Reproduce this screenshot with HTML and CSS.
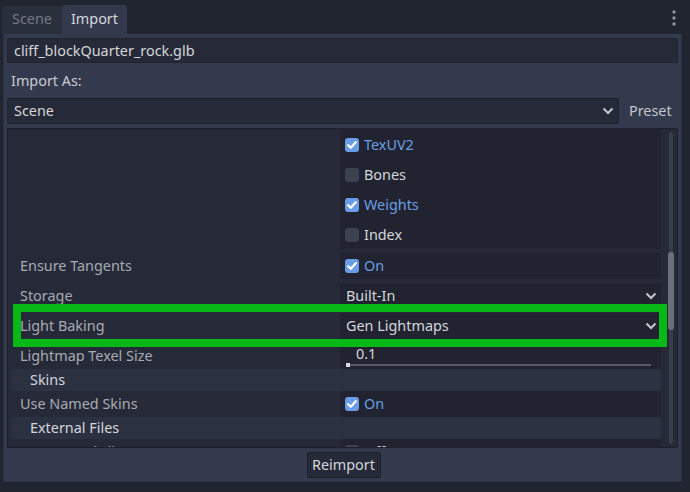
FILE: index.html
```html
<!DOCTYPE html>
<html>
<head>
<meta charset="utf-8">
<link rel="stylesheet" href="styles.css">
</head>
<body>
<div class="root">
  <div class="tabbar">
    <div class="tab tab-scene">Scene</div>
    <div class="tab tab-active">Import</div>
    <div class="tab-spacer"></div>
    <svg class="menu-dots" width="6" height="18" viewBox="0 0 6 18">
      <circle cx="3" cy="3" r="1.7" fill="#8f939c"/>
      <circle cx="3" cy="9" r="1.7" fill="#8f939c"/>
      <circle cx="3" cy="15" r="1.7" fill="#8f939c"/>
    </svg>
  </div>
  <div class="panel">
    <div class="field">cliff_blockQuarter_rock.glb</div>
    <div class="import-as">Import As:</div>
    <div class="select-row">
      <div class="select">
        <span>Scene</span>
        <svg class="chev" width="12" height="8" viewBox="0 0 12 8"><path d="M1.5 1.5 L6 6 L10.5 1.5" fill="none" stroke="#c4c6cc" stroke-width="2"/></svg>
      </div>
      <div class="preset">Preset</div>
    </div>
    <div class="inspector">
      <div class="content">
        <div class="prop arr">
          <div class="plabel"></div>
          <div class="pval arrval">
            <div class="chk-row first"><span class="cb on"><svg width="14" height="14" viewBox="0 0 14 14"><path d="M3.2 7.2 L5.8 9.8 L10.8 4.2" fill="none" stroke="#fff" stroke-width="2.2" stroke-linecap="round" stroke-linejoin="round"/></svg></span><span class="blue">TexUV2</span></div>
            <div class="chk-row"><span class="cb"></span><span class="val">Bones</span></div>
            <div class="chk-row"><span class="cb on"><svg width="14" height="14" viewBox="0 0 14 14"><path d="M3.2 7.2 L5.8 9.8 L10.8 4.2" fill="none" stroke="#fff" stroke-width="2.2" stroke-linecap="round" stroke-linejoin="round"/></svg></span><span class="blue">Weights</span></div>
            <div class="chk-row"><span class="cb"></span><span class="val">Index</span></div>
          </div>
        </div>
        <div class="prop gap">
          <div class="plabel">Ensure Tangents</div>
          <div class="pval"><span class="cb on"><svg width="14" height="14" viewBox="0 0 14 14"><path d="M3.2 7.2 L5.8 9.8 L10.8 4.2" fill="none" stroke="#fff" stroke-width="2.2" stroke-linecap="round" stroke-linejoin="round"/></svg></span><span class="blue">On</span></div>
        </div>
        <div class="prop gap">
          <div class="plabel">Storage</div>
          <div class="pval dd"><span class="val">Built-In</span><svg class="chev" width="12" height="8" viewBox="0 0 12 8"><path d="M1.5 1.5 L6 6 L10.5 1.5" fill="none" stroke="#c4c6cc" stroke-width="2"/></svg></div>
        </div>
        <div class="prop gap">
          <div class="plabel">Light Baking</div>
          <div class="pval dd"><span class="val">Gen Lightmaps</span><svg class="chev" width="12" height="8" viewBox="0 0 12 8"><path d="M1.5 1.5 L6 6 L10.5 1.5" fill="none" stroke="#c4c6cc" stroke-width="2"/></svg></div>
        </div>
        <div class="prop gap">
          <div class="plabel">Lightmap Texel Size</div>
          <div class="pval slider">
            <span class="val num">0.1</span>
            <div class="slide-line"><div class="slide-grab"></div></div>
          </div>
        </div>
        <div class="section">Skins</div>
        <div class="prop">
          <div class="plabel">Use Named Skins</div>
          <div class="pval"><span class="cb on"><svg width="14" height="14" viewBox="0 0 14 14"><path d="M3.2 7.2 L5.8 9.8 L10.8 4.2" fill="none" stroke="#fff" stroke-width="2.2" stroke-linecap="round" stroke-linejoin="round"/></svg></span><span class="blue">On</span></div>
        </div>
        <div class="section">External Files</div>
        <div class="prop">
          <div class="plabel">Store In Subdir</div>
          <div class="pval"><span class="cb"></span><span class="val">Off</span></div>
        </div>
      </div>
      <div class="scrollbar">
        <div class="track"></div>
        <div class="grabber"></div>
      </div>
    </div>
    <div class="footer">
      <div class="button">Reimport</div>
    </div>
  </div>
  <div class="highlight"></div>
</div>
</body>
</html>
```
FILE: styles.css
```css
* { box-sizing: border-box; }
html, body { margin: 0; padding: 0; }
body {
  background: #21252f;
  font-family: "Noto Sans", "Open Sans", sans-serif;
  font-size: 14.4px;
  color: #d4d6da;
  width: 690px;
  height: 492px;
  overflow: hidden;
}
.root {
  position: relative;
  width: 690px;
  height: 492px;
}
.tabbar {
  height: 34px;
  display: flex;
  align-items: flex-end;
  padding-left: 2px;
}
.tab {
  display: flex;
  align-items: center;
  justify-content: center;
  line-height: 1;
}
.tab-scene {
  width: 60px;
  height: 28px;
  background: #2a2f3c;
  color: #757a85;
  border-radius: 3px 3px 0 0;
  padding-bottom: 1px;
}
.tab-active {
  width: 65px;
  height: 29px;
  background: #333a4d;
  color: #d6d8dc;
  border-radius: 3px 3px 0 0;
  padding-bottom: 1px;
}
.tab-spacer { flex: 1; }
.menu-dots {
  align-self: flex-start;
  margin-top: 9px;
  margin-right: 13px;
}
.panel {
  margin-left: 3px;
  width: 679px;
  height: 448px;
  background: #333a4d;
  border: 1px solid #2b3142;
  border-top: none;
  padding: 4px 3px 3px 3px;
  display: flex;
  flex-direction: column;
}
.field {
  height: 25px;
  background: #262a38;
  border: 1px solid #1f232e;
  border-radius: 2px;
  padding-left: 6px;
  padding-bottom: 1px;
  display: flex;
  align-items: center;
  color: #d4d6da;
}
.import-as {
  height: 35px;
  display: flex;
  align-items: center;
  padding-left: 4px;
  color: #c9cbd0;
}
.select-row {
  display: flex;
  align-items: center;
  height: 26px;
}
.select {
  width: 612px;
  height: 26px;
  background: #262a38;
  border: 1px solid #1f232e;
  border-radius: 2px;
  display: flex;
  align-items: center;
  justify-content: space-between;
  padding: 0 4px 1px 6px;
  color: #d4d6da;
}
.preset {
  margin-left: 10px;
  color: #c2c4ca;
  padding-bottom: 1px;
}
.inspector {
  margin-top: 4px;
  height: 320px;
  background: #262a38;
  border: 1px solid #1d202b;
  display: flex;
  overflow: hidden;
}
.content {
  width: 653px;
  padding-left: 3px;
  display: flex;
  flex-direction: column;
  overflow: hidden;
}
.prop {
  display: flex;
  height: 26px;
  flex-shrink: 0;
}
.prop.gap { margin-top: 4px; }
.plabel {
  width: 329px;
  padding-left: 9px;
  padding-bottom: 1px;
  display: flex;
  align-items: center;
  color: #a8abb2;
  white-space: nowrap;
}
.pval {
  flex: 1;
  background: #212430;
  display: flex;
  align-items: center;
  padding-left: 5px;
  padding-right: 4px;
  gap: 5px;
}
.pval .val, .pval .blue { margin-top: -1px; }
.pval.dd {
  justify-content: space-between;
  padding-left: 6px;
}
.arr { height: 120px; }
.arrval {
  flex-direction: column;
  align-items: stretch;
  gap: 0;
}
.chk-row {
  height: 30px;
  display: flex;
  align-items: center;
  gap: 5px;
  flex-shrink: 0;
}
.chk-row.first { margin-top: 1px; }
.cb {
  width: 14px;
  height: 14px;
  border-radius: 3px;
  background: #3d4250;
  flex-shrink: 0;
  display: flex;
}
.cb.on { background: #6a9de6; }
.blue { color: #6a9de6; }
.val { color: #d4d6da; }
.slider {
  flex-direction: column;
  align-items: stretch;
  justify-content: flex-start;
  gap: 0;
  padding-left: 6px;
  padding-right: 10px;
}
.pval.slider .num {
  margin-top: 0;
  padding-left: 10px;
  height: 21px;
  line-height: 21px;
}
.slide-line {
  height: 2px;
  background: #555a66;
  position: relative;
}
.slide-grab {
  position: absolute;
  left: 0;
  top: -1px;
  width: 4px;
  height: 4px;
  background: #d8dade;
}
.section {
  height: 22px;
  flex-shrink: 0;
  background: #2c3142;
  display: flex;
  align-items: center;
  padding-left: 19px;
  padding-bottom: 1px;
  color: #d4d6da;
}
.scrollbar {
  position: relative;
  flex: 1;
}
.track {
  position: absolute;
  left: 8px;
  top: 3px;
  bottom: 3px;
  width: 4px;
  border-radius: 2px;
  background: #383d4c;
}
.grabber {
  position: absolute;
  left: 7px;
  top: 123px;
  width: 6px;
  height: 78px;
  border-radius: 3px;
  background: #6b6f7b;
}
.footer {
  flex: 1;
  display: flex;
  justify-content: center;
  align-items: flex-start;
  padding-top: 4px;
}
.button {
  width: 74px;
  height: 26px;
  background: #262a38;
  border: 1px solid #1d202b;
  border-radius: 2px;
  display: flex;
  align-items: center;
  justify-content: center;
  padding-bottom: 1px;
  color: #d4d6da;
  margin-left: 2px;
}
.highlight {
  position: absolute;
  left: 13px;
  top: 304px;
  width: 654px;
  height: 43px;
  border: 8px solid #07b817;
}
```
